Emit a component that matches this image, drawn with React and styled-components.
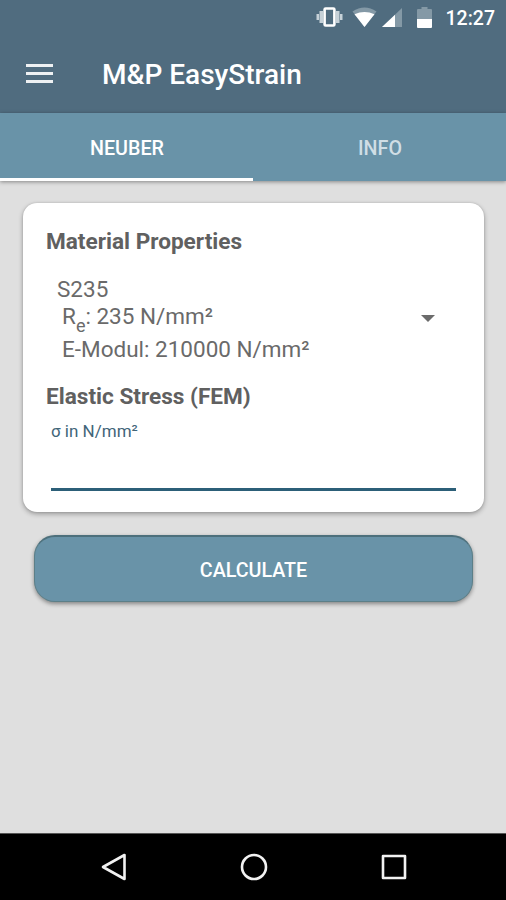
import { useState } from 'react';
import styled, { createGlobalStyle } from 'styled-components';

const GlobalStyle = createGlobalStyle`
  * {
    box-sizing: border-box;
  }
  body {
    margin: 0;
    font-family: Roboto, 'Noto Sans', sans-serif;
  }
`;

const Screen = styled.div`
  display: flex;
  flex-direction: column;
  width: 506px;
  height: 900px;
  overflow: hidden;
  background: #dfdfdf;
`;

const Header = styled.header`
  background: #506c7f;
  color: #fff;
`;

const StatusBar = styled.div`
  display: flex;
  align-items: center;
  justify-content: flex-end;
  height: 34px;
  padding-right: 11px;
`;

const StatusIcon = styled.svg`
  display: block;
  margin-right: ${(props) => props.$gap}px;
`;

const Clock = styled.span`
  font-size: 19.5px;
  font-weight: 500;
  line-height: 34px;
  padding-top: 3px;
`;

const Toolbar = styled.div`
  display: flex;
  align-items: center;
  height: 79px;
  padding: 2px 0 0 26px;
`;

const MenuButton = styled.button`
  display: flex;
  flex-direction: column;
  gap: 5px;
  width: 27px;
  margin: 0 49px 2px 0;
  padding: 0;
  border: none;
  background: none;
`;

const MenuBar = styled.span`
  height: 3px;
  background: #eef1f3;
`;

const Title = styled.h1`
  margin: 0;
  font-size: 28px;
  font-weight: 500;
  line-height: 32px;
`;

const Tabs = styled.nav`
  display: flex;
  flex-shrink: 0;
  height: 68px;
  background: #6993a8;
  box-shadow: 0 1px 4px rgba(0, 0, 0, 0.4);
`;

const Tab = styled.button`
  flex: 1;
  padding: 5px 0 0 1px;
  border: none;
  border-bottom: 3px solid ${(props) => (props.$active ? '#fff' : 'transparent')};
  background: none;
  color: ${(props) => (props.$active ? '#fff' : '#d0dee5')};
  font-family: inherit;
  font-size: 19.7px;
  font-weight: 500;
`;

const Content = styled.main`
  flex: 1;
  padding: 22px 22px 0 23px;
`;

const Card = styled.section`
  height: 309px;
  padding: 26px 28px 0 23px;
  border-radius: 14px;
  background: #fff;
  color: #606060;
  box-shadow: 0 2px 5px rgba(0, 0, 0, 0.32), 0 0 2px rgba(0, 0, 0, 0.15);
`;

const SectionTitle = styled.h2`
  margin: 0;
  font-size: 22.6px;
  font-weight: 700;
  line-height: 26px;
`;

const Spinner = styled.div`
  display: flex;
  align-items: center;
  justify-content: space-between;
  height: 103px;
  margin: 19px 21px 7px 11px;
`;

const Material = styled.div`
  align-self: flex-start;
  color: #6a6a6a;
  font-size: 22.5px;
`;

const MaterialLine = styled.div`
  height: ${(props) => props.$height}px;
  line-height: 30px;
  padding-left: ${(props) => props.$indent || 0}px;
  white-space: nowrap;
`;

const Sub = styled.sub`
  font-size: 18px;
  line-height: 0;
  vertical-align: -8px;
`;

const Arrow = styled.span`
  border: 7px solid transparent;
  border-top-color: #6b6b6b;
  border-bottom: none;
  margin-top: -15px;
`;

const Field = styled.label`
  display: block;
  margin: 11px 0 0 5px;
  color: #416579;
  font-size: 17px;
  line-height: 20px;
`;

const Input = styled.input`
  display: block;
  width: 100%;
  height: 50px;
  padding: 0;
  border: none;
  border-bottom: 3px solid #2c5f78;
  outline: none;
  background: none;
  font: inherit;
`;

const CalculateButton = styled.button`
  display: block;
  width: 439px;
  height: 67px;
  margin: 23px 0 0 11px;
  padding: 2px 0 0;
  border: 1px solid #5c7f88;
  border-top: 2px solid #4d707c;
  border-radius: 21px;
  background: #6993a8;
  color: #fff;
  font-family: inherit;
  font-size: 19.7px;
  font-weight: 500;
  box-shadow: 0 2px 4px rgba(0, 0, 0, 0.4);
`;

const NavBar = styled.footer`
  display: flex;
  align-items: center;
  justify-content: center;
  gap: 112px;
  height: 67px;
  padding-left: 1px;
  border-top: 1px solid #555;
  background: #000;
`;

const NavIcon = styled.svg`
  display: block;
  fill: none;
  stroke: #f2f2f2;
  stroke-width: 2.6;
  stroke-linejoin: round;
`;

function StatusIcons() {
  return (
    <>
      <StatusIcon $gap={9} width="27" height="20" viewBox="0 0 27 20">
        <path d="M0.5 7H3v6H0.5zM3.5 4H7v12H3.5zM20 4h3.5v12H20zM24 7h2.5v6H24z" fill="#c6d1d8" />
        <rect x="8.6" y="1.5" width="9.8" height="17" rx="1" fill="none" stroke="#fff" strokeWidth="2.6" />
      </StatusIcon>
      <StatusIcon $gap={5} width="25" height="20" viewBox="0 0 25 20">
        <path d="M12.5 20L0.5 4.5Q12.5-3.6 24.5 4.5z" fill="#8499a6" />
        <path d="M12.5 20L2.5 7.2Q12.5 2.6 22.5 7.2z" fill="#fff" />
      </StatusIcon>
      <StatusIcon $gap={15} width="20" height="19" viewBox="0 0 20 19">
        <path d="M20 0v19H0z" fill="#8499a6" />
        <path d="M13 6.7V19H0z" fill="#fff" />
      </StatusIcon>
      <StatusIcon $gap={14} width="15" height="21" viewBox="0 0 15 21">
        <path d="M4.5 0h6v2H14q1 0 1 1v9H0V3q0-1 1-1h3.5z" fill="#8499a6" />
        <path d="M0 12h15v8q0 1-1 1H1q-1 0-1-1z" fill="#fff" />
      </StatusIcon>
    </>
  );
}

function App() {
  const [tab, setTab] = useState('NEUBER');
  const [stress, setStress] = useState('');

  return (
    <>
      <GlobalStyle />
      <Screen>
        <Header>
          <StatusBar>
            <StatusIcons />
            <Clock>12:27</Clock>
          </StatusBar>
          <Toolbar>
            <MenuButton aria-label="Menu">
              <MenuBar />
              <MenuBar />
              <MenuBar />
            </MenuButton>
            <Title>M&amp;P EasyStrain</Title>
          </Toolbar>
        </Header>
        <Tabs>
          {['NEUBER', 'INFO'].map((name) => (
            <Tab key={name} $active={tab === name} onClick={() => setTab(name)}>
              {name}
            </Tab>
          ))}
        </Tabs>
        <Content>
          <Card>
            <SectionTitle>Material Properties</SectionTitle>
            <Spinner>
              <Material>
                <MaterialLine $height={27}>S235</MaterialLine>
                <MaterialLine $height={33} $indent={5}>
                  R<Sub>e</Sub>: 235 N/mm²
                </MaterialLine>
                <MaterialLine $height={30} $indent={5}>
                  E-Modul: 210000 N/mm²
                </MaterialLine>
              </Material>
              <Arrow />
            </Spinner>
            <SectionTitle>Elastic Stress (FEM)</SectionTitle>
            <Field>
              σ in N/mm²
              <Input value={stress} onChange={(e) => setStress(e.target.value)} />
            </Field>
          </Card>
          <CalculateButton>CALCULATE</CalculateButton>
        </Content>
        <NavBar>
          <NavIcon width="28" height="28" viewBox="0 0 28 28">
            <path d="M24.5 2v24L3 14z" />
          </NavIcon>
          <NavIcon width="28" height="28" viewBox="0 0 28 28">
            <circle cx="14" cy="14" r="12" />
          </NavIcon>
          <NavIcon width="28" height="28" viewBox="0 0 28 28">
            <rect x="3" y="3" width="22" height="22" />
          </NavIcon>
        </NavBar>
      </Screen>
    </>
  );
}

export default App;
